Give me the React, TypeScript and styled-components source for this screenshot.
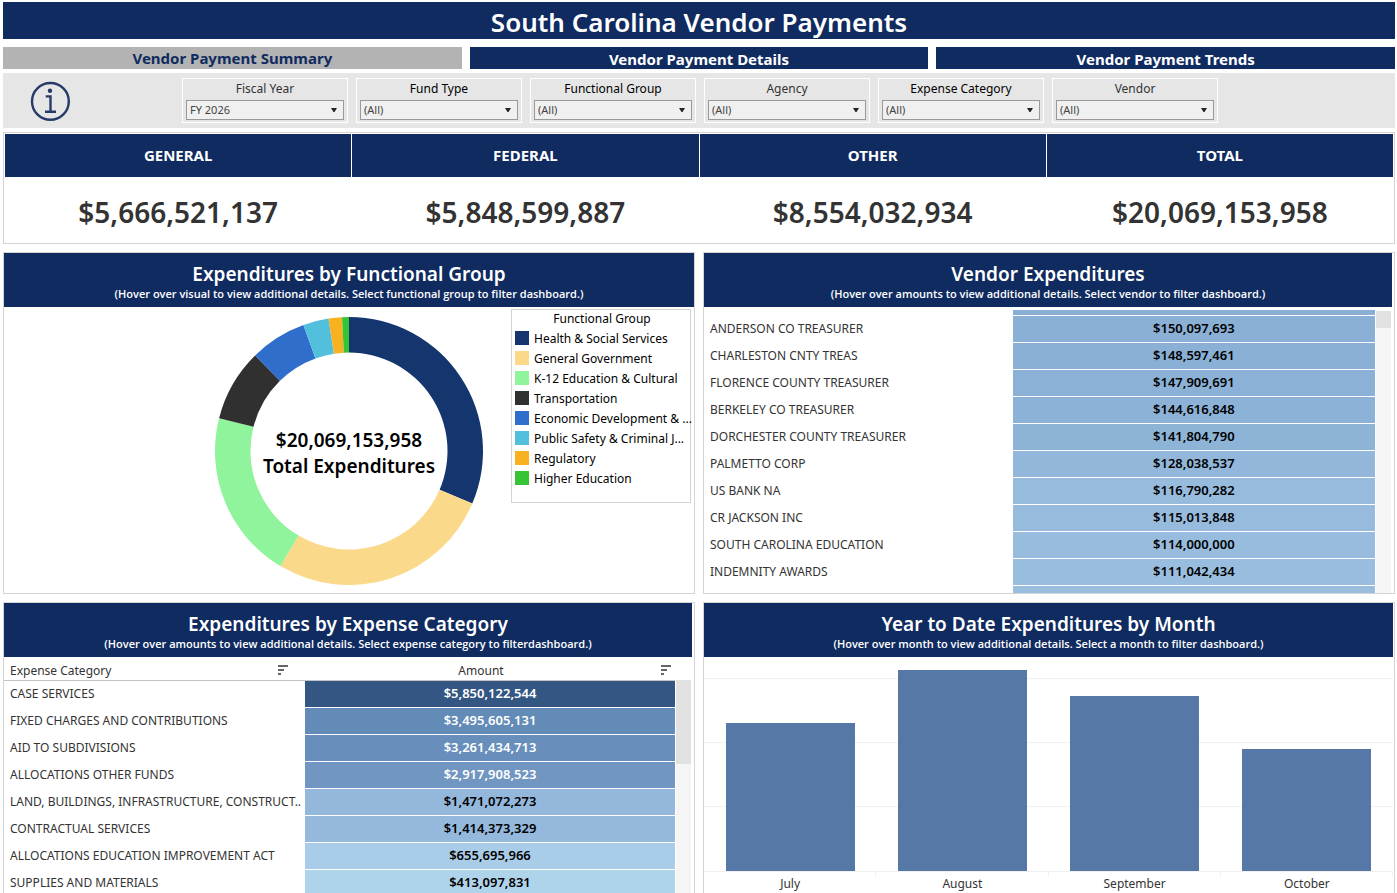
import React, { useLayoutEffect, useRef } from 'react';
import styled, { createGlobalStyle } from 'styled-components';

const navy = '#102b60';
const frame = '#d4d4d4';

const GlobalStyle = createGlobalStyle`
  *, *::before, *::after { box-sizing: border-box; }
  body {
    margin: 0;
    background: #fff;
    color: #333;
    font-family: 'Noto Sans', 'Open Sans', sans-serif;
    font-size: 12px;
    line-height: 16px;
  }
`;

const Page = styled.main`
  display: flex;
  flex-direction: column;
  height: 100vh;
  padding: 2px 2px 0 3px;
  overflow: hidden;
`;

const Title = styled.h1`
  flex: none;
  margin: 0 0 8px;
  background: ${navy};
  color: #fff;
  font-size: 26px;
  font-weight: 600;
  line-height: 41px;
  height: 37px;
  text-align: center;
`;

const Tabs = styled.nav`
  flex: none;
  display: grid;
  grid-template-columns: repeat(3, 1fr);
  gap: 8px;
  margin-bottom: 4px;
`;

const Tab = styled.a<{ $active?: boolean }>`
  background: ${(p) => (p.$active ? '#b3b3b3' : navy)};
  color: ${(p) => (p.$active ? navy : '#fff')};
  font-size: 15px;
  font-weight: 700;
  height: 22px;
  line-height: ${(p) => (p.$active ? '22px' : '24px')};
  text-align: center;
  text-decoration: none;
`;

const FilterBar = styled.section`
  flex: none;
  display: flex;
  align-items: flex-start;
  height: 55px;
  padding: 5px 0 0 27px;
  margin-bottom: 4px;
  background: #e6e6e6;
`;

const InfoButton = styled.button`
  width: 40px;
  height: 40px;
  margin: 3px 112px 0 0;
  padding: 0;
  border: 0;
  background: none;
`;

const Filters = styled.div`
  display: flex;
  gap: 8px;
`;

const Filter = styled.label<{ $strong?: boolean }>`
  display: flex;
  flex-direction: column;
  gap: 3px;
  width: 166px;
  height: 45px;
  padding: 2px 3px;
  border: 1px solid #fff;
  color: ${(p) => (p.$strong ? '#000' : '#333')};
  text-align: center;
`;

const SelectBox = styled.span`
  position: relative;
  display: block;
  height: 20px;
`;

const Select = styled.select`
  display: block;
  appearance: none;
  width: 100%;
  height: 20px;
  padding: 0 16px 0 3px;
  border: 1px solid #999;
  border-radius: 0;
  background: #f0f0f0;
  color: #444;
  font-family: inherit;
  font-size: 11px;
  line-height: 18px;
`;

const Caret = styled.svg`
  position: absolute;
  top: 8px;
  right: 7px;
  pointer-events: none;
`;

const Totals = styled.section`
  flex: none;
  display: grid;
  grid-template-columns: repeat(4, 1fr);
  column-gap: 1px;
  height: 112px;
  padding: 1px;
  margin-bottom: 8px;
  border: 1px solid ${frame};
`;

const Total = styled.div`
  text-align: center;
`;

const TotalName = styled.h2`
  margin: 0;
  background: ${navy};
  color: #fff;
  font-size: 15px;
  font-weight: 700;
  height: 43px;
  line-height: 43px;
`;

const TotalValue = styled.p`
  margin: 0;
  font-size: 28px;
  font-weight: 600;
  line-height: 70px;
`;

const Row = styled.div<{ $fill?: boolean }>`
  flex: ${(p) => (p.$fill ? '1 1 0' : 'none')};
  min-height: 0;
  display: grid;
  grid-template-columns: repeat(2, minmax(0, 1fr));
  grid-template-rows: minmax(0, 1fr);
  gap: 8px;
  height: ${(p) => (p.$fill ? 'auto' : '342px')};
  margin-bottom: ${(p) => (p.$fill ? '0' : '8px')};
`;

const Panel = styled.section<{ $inset?: number; $open?: boolean }>`
  display: flex;
  flex-direction: column;
  min-height: 0;
  padding-right: ${(p) => p.$inset ?? 0}px;
  border: 1px solid ${frame};
  border-bottom-width: ${(p) => (p.$open ? '0' : '1px')};
  overflow: hidden;
`;

const PanelHead = styled.header`
  flex: none;
  height: 54px;
  padding-top: 9px;
  background: ${navy};
  color: #fff;
  text-align: center;
`;

const PanelTitle = styled.h2`
  margin: 0;
  font-size: 19px;
  font-weight: 600;
  line-height: 24px;
`;

const PanelHint = styled.p`
  margin: 0;
  font-family: 'Open Sans', 'Noto Sans', sans-serif;
  font-size: 11px;
  font-weight: 600;
  line-height: 16px;
`;

const DonutBody = styled.div`
  flex: 1;
  display: grid;
  grid-template-columns: 1fr 180px;
  padding-right: 3px;
`;

const DonutArea = styled.div`
  position: relative;
  justify-self: end;
  width: 268px;
  height: 268px;
  margin: 10px 28px 0 0;
`;

const DonutLabel = styled.div`
  position: absolute;
  inset: 0;
  display: flex;
  flex-direction: column;
  align-items: center;
  justify-content: center;
  padding-top: 3px;
  color: #000;
  font-size: 19px;
  font-weight: 600;
  line-height: 26px;
  text-align: center;
`;

const Legend = styled.aside`
  align-self: start;
  height: 194px;
  margin-top: 2px;
  padding: 0 1px 0 3px;
  border: 1px solid ${frame};
  color: #000;
`;

const LegendTitle = styled.h3`
  margin: 0;
  font-size: 12px;
  font-weight: 400;
  line-height: 18px;
  text-align: center;
`;

const LegendList = styled.ul`
  margin: 0;
  padding: 0;
  list-style: none;
`;

const LegendItem = styled.li`
  display: flex;
  align-items: center;
  gap: 5px;
  height: 20px;
`;

const Swatch = styled.span<{ $color: string }>`
  flex: none;
  width: 14px;
  height: 14px;
  background: ${(p) => p.$color};
`;

const LegendText = styled.span`
  padding-top: 2px;
  white-space: nowrap;
`;

const TableBody = styled.div<{ $gap?: boolean }>`
  flex: 1;
  display: flex;
  min-height: 0;
  padding-top: ${(p) => (p.$gap ? '3px' : '0')};
  padding-right: 1px;
`;

const ListView = styled.div`
  flex: 1;
  min-width: 0;
  overflow: hidden auto;
  scrollbar-width: none;
`;

const DataTable = styled.table<{ $nameWidth: string }>`
  width: 100%;
  border-collapse: separate;
  border-spacing: 0;
  table-layout: fixed;

  col:first-child { width: ${(p) => p.$nameWidth}; }
`;

const HeadCell = styled.th<{ $center?: boolean }>`
  position: relative;
  height: 24px;
  padding: 6px 24px 1px 6px;
  border-bottom: 1px solid #c4c4c4;
  font-weight: 400;
  line-height: 16px;
  text-align: ${(p) => (p.$center ? 'center' : 'left')};
`;

const SortButton = styled.button<{ $last?: boolean }>`
  position: absolute;
  top: 8px;
  right: ${(p) => (p.$last ? '4px' : '17px')};
  width: 10px;
  height: 10px;
  padding: 0;
  border: 0;
  background: none;

  svg { display: block; }
`;

const NameCell = styled.th`
  height: 27px;
  padding: 0 0 1px 6px;
  font-weight: 400;
  text-align: left;
  white-space: nowrap;
`;

const AmountCell = styled.td<{ $fill: string; $light?: boolean }>`
  height: 27px;
  padding: 0 0 2px;
  border-bottom: 1px solid #fff;
  background: ${(p) => p.$fill};
  color: ${(p) => (p.$light ? '#fff' : '#000')};
  font-size: 13px;
  font-weight: 600;
  text-align: center;
`;

const ScrollTrack = styled.div<{ $top: number }>`
  flex: none;
  width: 15px;
  margin: ${(p) => p.$top}px 0 0 1px;
  background: #f5f5f5;
`;

const ScrollThumb = styled.div<{ $size: number }>`
  height: ${(p) => p.$size}px;
  background: #e1e1e1;
`;

const Chart = styled.div`
  flex: 1;
  display: flex;
  flex-direction: column;
  min-height: 0;
  padding-top: 3px;
`;

const Plot = styled.div`
  position: relative;
  flex: 1;
  display: grid;
  grid-template-columns: repeat(4, 1fr);
  align-items: end;
  border-bottom: 1px solid #f0f0f0;
`;

const GridLine = styled.span`
  position: absolute;
  left: 0;
  right: 0;
  height: 1px;
  background: #f0f0f0;
`;

const Bar = styled.div`
  position: relative;
  justify-self: center;
  width: 75%;
  background: #5578a7;
`;

const MonthAxis = styled.div`
  flex: none;
  display: grid;
  grid-template-columns: repeat(4, 1fr);
  height: 21px;
`;

const Month = styled.span`
  padding-top: 4px;
  background: linear-gradient(#f0f0f0, #f0f0f0) right top / 1px 4px no-repeat;
  text-align: center;
`;

const groups = [
  { name: 'Health & Social Services', color: '#15356f', end: 113.1 },
  { name: 'General Government', color: '#fada8a', end: 210.8 },
  { name: 'K-12 Education & Cultural', color: '#8ff49c', end: 284.2 },
  { name: 'Transportation', color: '#303030', end: 315.5 },
  { name: 'Economic Development & ...', color: '#2f6ecb', end: 340.1 },
  { name: 'Public Safety & Criminal J...', color: '#52c0dd', end: 351.2 },
  { name: 'Regulatory', color: '#f8b120', end: 357 },
  { name: 'Higher Education', color: '#35c435', end: 360 },
];

const totals = [
  ['GENERAL', '$5,666,521,137'],
  ['FEDERAL', '$5,848,599,887'],
  ['OTHER', '$8,554,032,934'],
  ['TOTAL', '$20,069,153,958'],
];

const filters = [
  { label: 'Fiscal Year', value: 'FY 2026' },
  { label: 'Fund Type', value: '(All)', strong: true },
  { label: 'Functional Group', value: '(All)', strong: true },
  { label: 'Agency', value: '(All)' },
  { label: 'Expense Category', value: '(All)', strong: true },
  { label: 'Vendor', value: '(All)' },
];

const vendors = [
  ['', '', '#89afd5'],
  ['ANDERSON CO TREASURER', '$150,097,693', '#8ab0d6'],
  ['CHARLESTON CNTY TREAS', '$148,597,461', '#8ab0d6'],
  ['FLORENCE COUNTY TREASURER', '$147,909,691', '#8bb1d6'],
  ['BERKELEY CO TREASURER', '$144,616,848', '#8cb2d7'],
  ['DORCHESTER COUNTY TREASURER', '$141,804,790', '#8db3d7'],
  ['PALMETTO CORP', '$128,038,537', '#92b7da'],
  ['US BANK NA', '$116,790,282', '#96bbdd'],
  ['CR JACKSON INC', '$115,013,848', '#97bbdd'],
  ['SOUTH CAROLINA EDUCATION', '$114,000,000', '#97bcdd'],
  ['INDEMNITY AWARDS', '$111,042,434', '#98bdde'],
  ['', '', '#99bede'],
];

const expenses: [string, string, string, boolean?][] = [
  ['CASE SERVICES', '$5,850,122,544', '#345682', true],
  ['FIXED CHARGES AND CONTRIBUTIONS', '$3,495,605,131', '#628bb8', true],
  ['AID TO SUBDIVISIONS', '$3,261,434,713', '#688fbb', true],
  ['ALLOCATIONS OTHER FUNDS', '$2,917,908,523', '#7096c1', true],
  ['LAND, BUILDINGS, INFRASTRUCTURE, CONSTRUCT..', '$1,471,072,273', '#93b8db'],
  ['CONTRACTUAL SERVICES', '$1,414,373,329', '#94b9dc'],
  ['ALLOCATIONS EDUCATION IMPROVEMENT ACT', '$655,695,966', '#a9cde8'],
  ['SUPPLIES AND MATERIALS', '$413,097,831', '#b0d3ec'],
];

const months = [
  { name: 'July', billions: 4.64 },
  { name: 'August', billions: 6.3 },
  { name: 'September', billions: 5.48 },
  { name: 'October', billions: 3.82 },
];
const axisMax = 6.6;

const point = (deg: number, r: number) => {
  const a = ((deg - 90) * Math.PI) / 180;
  return `${134 + r * Math.cos(a)} ${134 + r * Math.sin(a)}`;
};

function Donut() {
  return (
    <svg width="268" height="268" viewBox="0 0 268 268" role="img" aria-label="Expenditures by functional group">
      {groups.map((g, i) => {
        const start = i ? groups[i - 1].end : 0;
        const large = g.end - start > 180 ? 1 : 0;
        return (
          <path
            key={g.name}
            fill={g.color}
            d={`M${point(start, 134)}A134 134 0 ${large} 1 ${point(g.end, 134)}L${point(g.end, 98.5)}A98.5 98.5 0 ${large} 0 ${point(start, 98.5)}Z`}
          />
        );
      })}
    </svg>
  );
}

function SortIcon() {
  return (
    <svg width="10" height="10" viewBox="0 0 10 10" fill="#666" aria-hidden="true">
      <path d="M0 0h10v2H0zM0 4h6v2H0zM0 8h3v2H0z" />
    </svg>
  );
}

function Heading({ title, hint }: { title: string; hint: string }) {
  return (
    <PanelHead>
      <PanelTitle>{title}</PanelTitle>
      <PanelHint>{hint}</PanelHint>
    </PanelHead>
  );
}

function VendorList() {
  const view = useRef<HTMLDivElement>(null);
  useLayoutEffect(() => {
    if (view.current) view.current.scrollTop = 21;
  }, []);
  return (
    <TableBody $gap>
      <ListView ref={view}>
        <DataTable $nameWidth="46%">
          <colgroup><col /><col /></colgroup>
          <tbody>
            {vendors.map(([name, amount, fill], i) => (
              <tr key={i}>
                <NameCell scope="row">{name}</NameCell>
                <AmountCell $fill={fill}>{amount}</AmountCell>
              </tr>
            ))}
          </tbody>
        </DataTable>
      </ListView>
      <ScrollTrack $top={1}><ScrollThumb $size={17} /></ScrollTrack>
    </TableBody>
  );
}

function ExpenseList() {
  return (
    <TableBody>
      <ListView>
        <DataTable $nameWidth="301px">
          <colgroup><col /><col /></colgroup>
          <thead>
            <tr>
              <HeadCell scope="col">
                Expense Category
                <SortButton aria-label="Sort by expense category"><SortIcon /></SortButton>
              </HeadCell>
              <HeadCell scope="col" $center>
                Amount
                <SortButton $last aria-label="Sort by amount"><SortIcon /></SortButton>
              </HeadCell>
            </tr>
          </thead>
          <tbody>
            {expenses.map(([name, amount, fill, light]) => (
              <tr key={name}>
                <NameCell scope="row">{name}</NameCell>
                <AmountCell $fill={fill} $light={light}>{amount}</AmountCell>
              </tr>
            ))}
          </tbody>
        </DataTable>
      </ListView>
      <ScrollTrack $top={23}><ScrollThumb $size={84} /></ScrollTrack>
    </TableBody>
  );
}

export default function App() {
  return (
    <>
      <GlobalStyle />
      <Page>
        <Title>South Carolina Vendor Payments</Title>
        <Tabs>
          <Tab href="#summary" $active>Vendor Payment Summary</Tab>
          <Tab href="#details">Vendor Payment Details</Tab>
          <Tab href="#trends">Vendor Payment Trends</Tab>
        </Tabs>
        <FilterBar>
          <InfoButton aria-label="Information">
            <svg width="40" height="40" viewBox="0 0 40 40" fill="none" stroke="#263a68" aria-hidden="true">
              <circle cx="20.4" cy="20.4" r="18.4" strokeWidth="2.4" />
              <circle cx="20" cy="9.8" r="2.2" fill="#263a68" stroke="none" />
              <path d="M15.7 15.4h4.8v15.4M15 30.8h11" strokeWidth="2.4" />
            </svg>
          </InfoButton>
          <Filters>
            {filters.map((f) => (
              <Filter key={f.label} $strong={f.strong}>
                {f.label}
                <SelectBox>
                  <Select defaultValue={f.value}><option>{f.value}</option></Select>
                  <Caret width="6" height="4" viewBox="0 0 6 4" aria-hidden="true">
                    <path d="M0 0h6L3.5 4h-1z" fill="#222" />
                  </Caret>
                </SelectBox>
              </Filter>
            ))}
          </Filters>
        </FilterBar>
        <Totals>
          {totals.map(([name, value]) => (
            <Total key={name}>
              <TotalName>{name}</TotalName>
              <TotalValue>{value}</TotalValue>
            </Total>
          ))}
        </Totals>
        <Row>
          <Panel>
            <Heading
              title="Expenditures by Functional Group"
              hint="(Hover over visual to view additional details. Select functional group to filter dashboard.)"
            />
            <DonutBody>
              <DonutArea>
                <Donut />
                <DonutLabel>
                  <span>$20,069,153,958</span>
                  <span>Total Expenditures</span>
                </DonutLabel>
              </DonutArea>
              <Legend>
                <LegendTitle>Functional Group</LegendTitle>
                <LegendList>
                  {groups.map((g) => (
                    <LegendItem key={g.name}>
                      <Swatch $color={g.color} />
                      <LegendText>{g.name}</LegendText>
                    </LegendItem>
                  ))}
                </LegendList>
              </Legend>
            </DonutBody>
          </Panel>
          <Panel $inset={2}>
            <Heading
              title="Vendor Expenditures"
              hint="(Hover over amounts to view additional details. Select vendor to filter dashboard.)"
            />
            <VendorList />
          </Panel>
        </Row>
        <Row $fill>
          <Panel $inset={2} $open>
            <Heading
              title="Expenditures by Expense Category"
              hint="(Hover over amounts to view additional details. Select expense category to filterdashboard.)"
            />
            <ExpenseList />
          </Panel>
          <Panel $inset={1} $open>
            <Heading
              title="Year to Date Expenditures by Month"
              hint="(Hover over month to view additional details. Select a month to filter dashboard.)"
            />
            <Chart>
              <Plot>
                {[2, 4, 6].map((v) => (
                  <GridLine key={v} style={{ bottom: `${(v / axisMax) * 100}%` }} />
                ))}
                {months.map((m) => (
                  <Bar key={m.name} style={{ height: `${(m.billions / axisMax) * 100}%` }} />
                ))}
              </Plot>
              <MonthAxis>
                {months.map((m) => <Month key={m.name}>{m.name}</Month>)}
              </MonthAxis>
            </Chart>
          </Panel>
        </Row>
      </Page>
    </>
  );
}
